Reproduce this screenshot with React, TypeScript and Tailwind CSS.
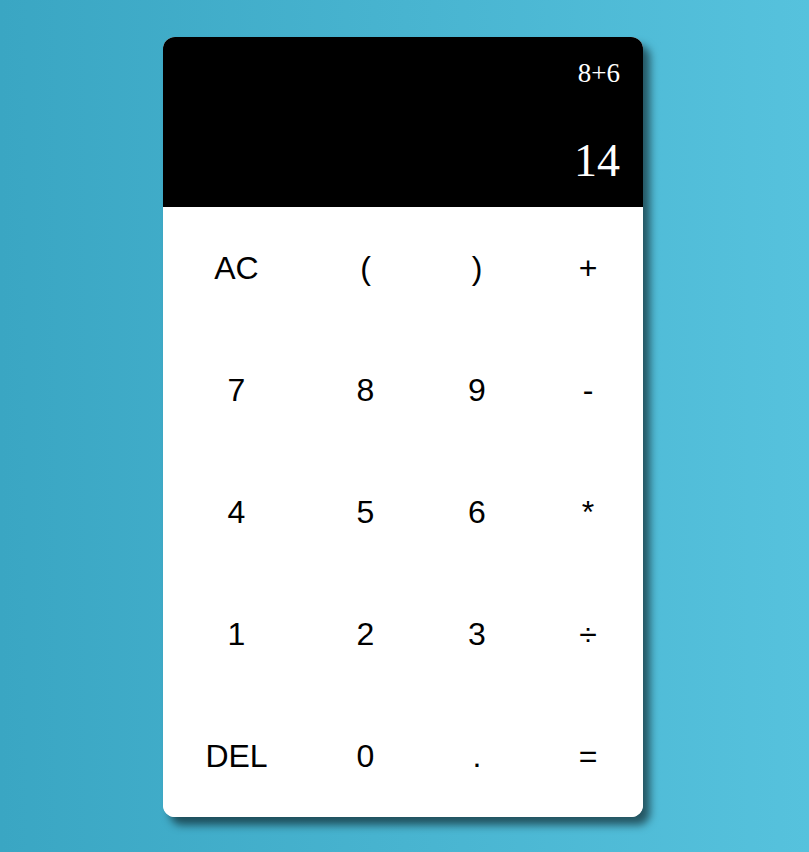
import React from "react";

const keys = ["AC", "(", ")", "+", "7", "8", "9", "-", "4", "5", "6", "*", "1", "2", "3", "÷", "DEL", "0", ".", "="];

export default function App() {
  return (
    <div className="min-h-screen w-full bg-[linear-gradient(to_right,#3aa6c3,#56c2dd)] pt-[37px]">
      <div className="ml-[163px] w-[480px] h-[780px] rounded-xl overflow-hidden bg-white shadow-[7px_8px_8px_rgba(0,0,0,0.55)] flex flex-col">
        <div className="h-[170px] bg-black flex flex-col items-end justify-between py-[21px] pr-[23px] text-white font-['Liberation_Serif',serif]">
          <div className="text-[27px] leading-[30px]">8+6</div>
          <div className="text-[46px] leading-[51px]">14</div>
        </div>
        <div className="grid grid-cols-[147px_111px_112px_110px] grid-rows-[repeat(5,122px)] font-['Liberation_Sans',Arial,sans-serif] text-[32px] text-black">
          {keys.map((k) => (
            <button key={k} className="flex items-center justify-center bg-white">
              {k}
            </button>
          ))}
        </div>
      </div>
    </div>
  );
}
